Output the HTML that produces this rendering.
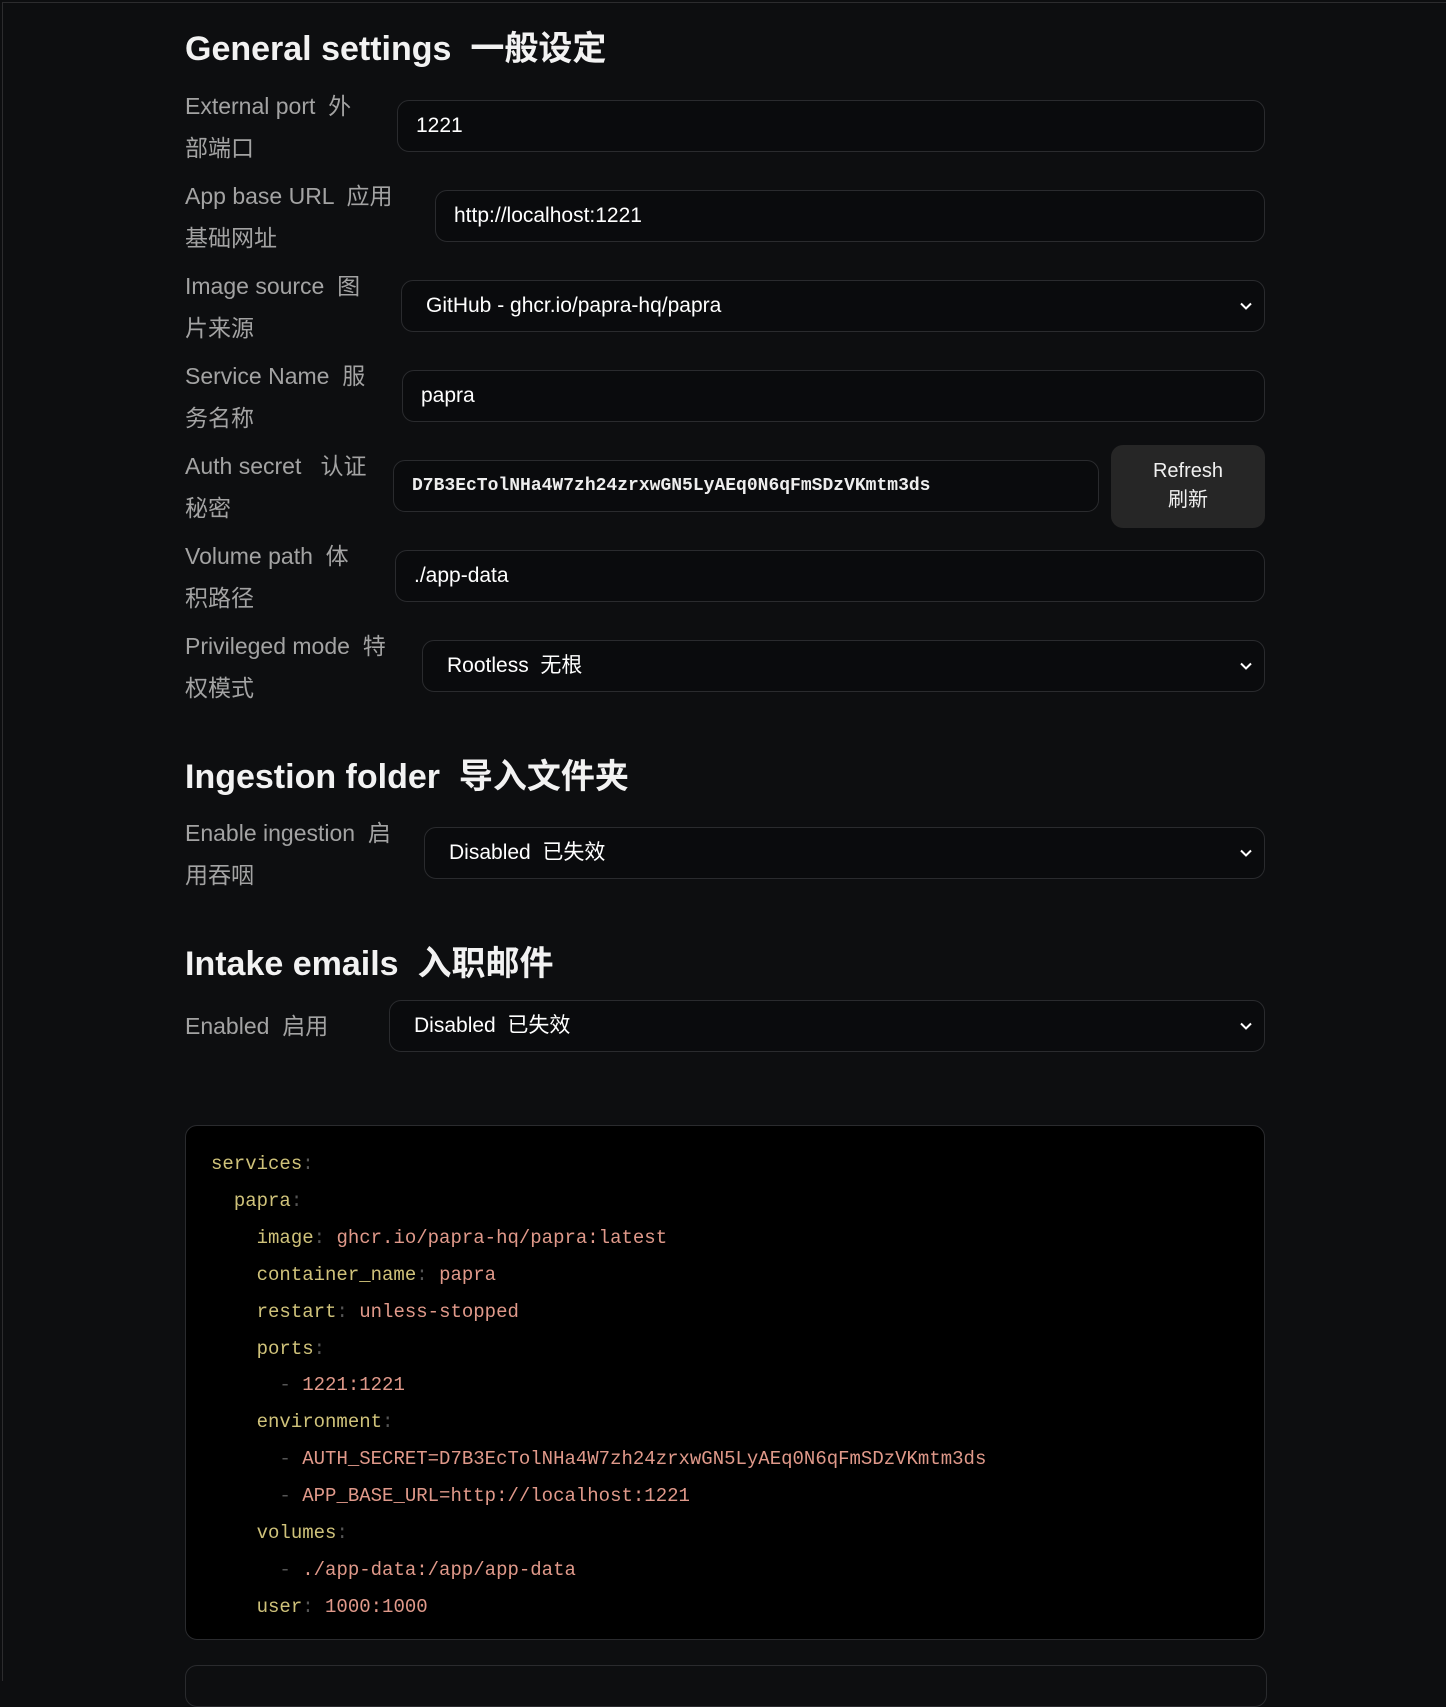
<!DOCTYPE html>
<html><head><meta charset="utf-8"><style>
html,body{margin:0;padding:0;}
body{width:1446px;height:1671px;background:#0d0e10;position:relative;overflow:hidden;font-family:"Liberation Sans","Noto Sans CJK SC",sans-serif;color:#fff;}
.frame{position:absolute;left:2px;top:2px;right:-10px;bottom:-10px;border-left:1px solid #2c2c2e;border-top:1px solid #2c2c2e;}
h2{position:absolute;left:185px;margin:0;font-size:34px;font-weight:bold;color:#f2f2f2;line-height:40px;}
.lab{position:absolute;left:185px;font-size:23px;line-height:42px;color:#a3a3a3;}
.in{position:absolute;right:181px;height:52px;box-sizing:border-box;border:1px solid #2a2b2e;border-radius:12px;background:#0a0b0d;font-size:21px;line-height:50px;color:#fff;padding-left:18px;}
.sel{padding-left:24px;}
.chev{position:absolute;right:12px;top:19px;width:12px;height:12px;}
.btn{position:absolute;left:1111px;top:445px;width:154px;height:83px;background:#262626;border-radius:12px;font-size:20px;line-height:29px;text-align:center;padding-top:12px;box-sizing:border-box;color:#f0f0f0;}
.mono{font-family:"Liberation Mono","DejaVu Sans Mono",monospace;}
.code{position:absolute;left:185px;top:1125px;width:1080px;height:515px;box-sizing:border-box;background:#000;border:1px solid #2a2b2e;border-radius:12px;padding:20px 0 0 25px;font-size:19px;line-height:36.9px;white-space:pre;}
.k{color:#cfc27a}.v{color:#e0998a}.p{color:#555}
.box2{position:absolute;left:185px;top:1665px;width:1080px;height:40px;border:1px solid #2a2b2e;border-radius:12px;}
</style></head><body>
<div class="frame"></div>
<h2 style="top:29px">General settings &nbsp;一般设定</h2>

<div class="lab" style="top:85px">External port &nbsp;外<br>部端口</div>
<div class="in" style="left:397px;top:100px">1221</div>

<div class="lab" style="top:175px">App base URL &nbsp;应用<br>基础网址</div>
<div class="in" style="left:435px;top:190px">http://localhost:1221</div>

<div class="lab" style="top:265px">Image source &nbsp;图<br>片来源</div>
<div class="in sel" style="left:401px;top:280px">GitHub - ghcr.io/papra-hq/papra<svg class="chev" viewBox="0 0 12 12"><path d="M1 3.5 6 8.5 11 3.5" fill="none" stroke="#fff" stroke-width="2"/></svg></div>

<div class="lab" style="top:355px">Service Name &nbsp;服<br>务名称</div>
<div class="in" style="left:402px;top:370px">papra</div>

<div class="lab" style="top:445px">Auth secret &nbsp;&nbsp;认证<br>秘密</div>
<div class="in mono" style="left:393px;right:347px;top:460px;font-size:18px;font-weight:bold;color:#eee">D7B3EcTolNHa4W7zh24zrxwGN5LyAEq0N6qFmSDzVKmtm3ds</div>
<div class="btn">Refresh<br>刷新</div>

<div class="lab" style="top:535px">Volume path &nbsp;体<br>积路径</div>
<div class="in" style="left:395px;top:550px">./app-data</div>

<div class="lab" style="top:625px">Privileged mode &nbsp;特<br>权模式</div>
<div class="in sel" style="left:422px;top:640px">Rootless &nbsp;无根<svg class="chev" viewBox="0 0 12 12"><path d="M1 3.5 6 8.5 11 3.5" fill="none" stroke="#fff" stroke-width="2"/></svg></div>

<h2 style="top:757px">Ingestion folder &nbsp;导入文件夹</h2>
<div class="lab" style="top:812px">Enable ingestion &nbsp;启<br>用吞咽</div>
<div class="in sel" style="left:424px;top:827px">Disabled &nbsp;已失效<svg class="chev" viewBox="0 0 12 12"><path d="M1 3.5 6 8.5 11 3.5" fill="none" stroke="#fff" stroke-width="2"/></svg></div>

<h2 style="top:944px">Intake emails &nbsp;入职邮件</h2>
<div class="lab" style="top:1005px">Enabled &nbsp;启用</div>
<div class="in sel" style="left:389px;top:1000px">Disabled &nbsp;已失效<svg class="chev" viewBox="0 0 12 12"><path d="M1 3.5 6 8.5 11 3.5" fill="none" stroke="#fff" stroke-width="2"/></svg></div>

<div class="code mono"><span class="k">services</span><span class="p">:</span>
  <span class="k">papra</span><span class="p">:</span>
    <span class="k">image</span><span class="p">:</span> <span class="v">ghcr.io/papra-hq/papra:latest</span>
    <span class="k">container_name</span><span class="p">:</span> <span class="v">papra</span>
    <span class="k">restart</span><span class="p">:</span> <span class="v">unless-stopped</span>
    <span class="k">ports</span><span class="p">:</span>
      <span class="p">-</span> <span class="v">1221:1221</span>
    <span class="k">environment</span><span class="p">:</span>
      <span class="p">-</span> <span class="v">AUTH_SECRET=D7B3EcTolNHa4W7zh24zrxwGN5LyAEq0N6qFmSDzVKmtm3ds</span>
      <span class="p">-</span> <span class="v">APP_BASE_URL=http://localhost:1221</span>
    <span class="k">volumes</span><span class="p">:</span>
      <span class="p">-</span> <span class="v">./app-data:/app/app-data</span>
    <span class="k">user</span><span class="p">:</span> <span class="v">1000:1000</span></div>
<div class="box2"></div>
</body></html>
